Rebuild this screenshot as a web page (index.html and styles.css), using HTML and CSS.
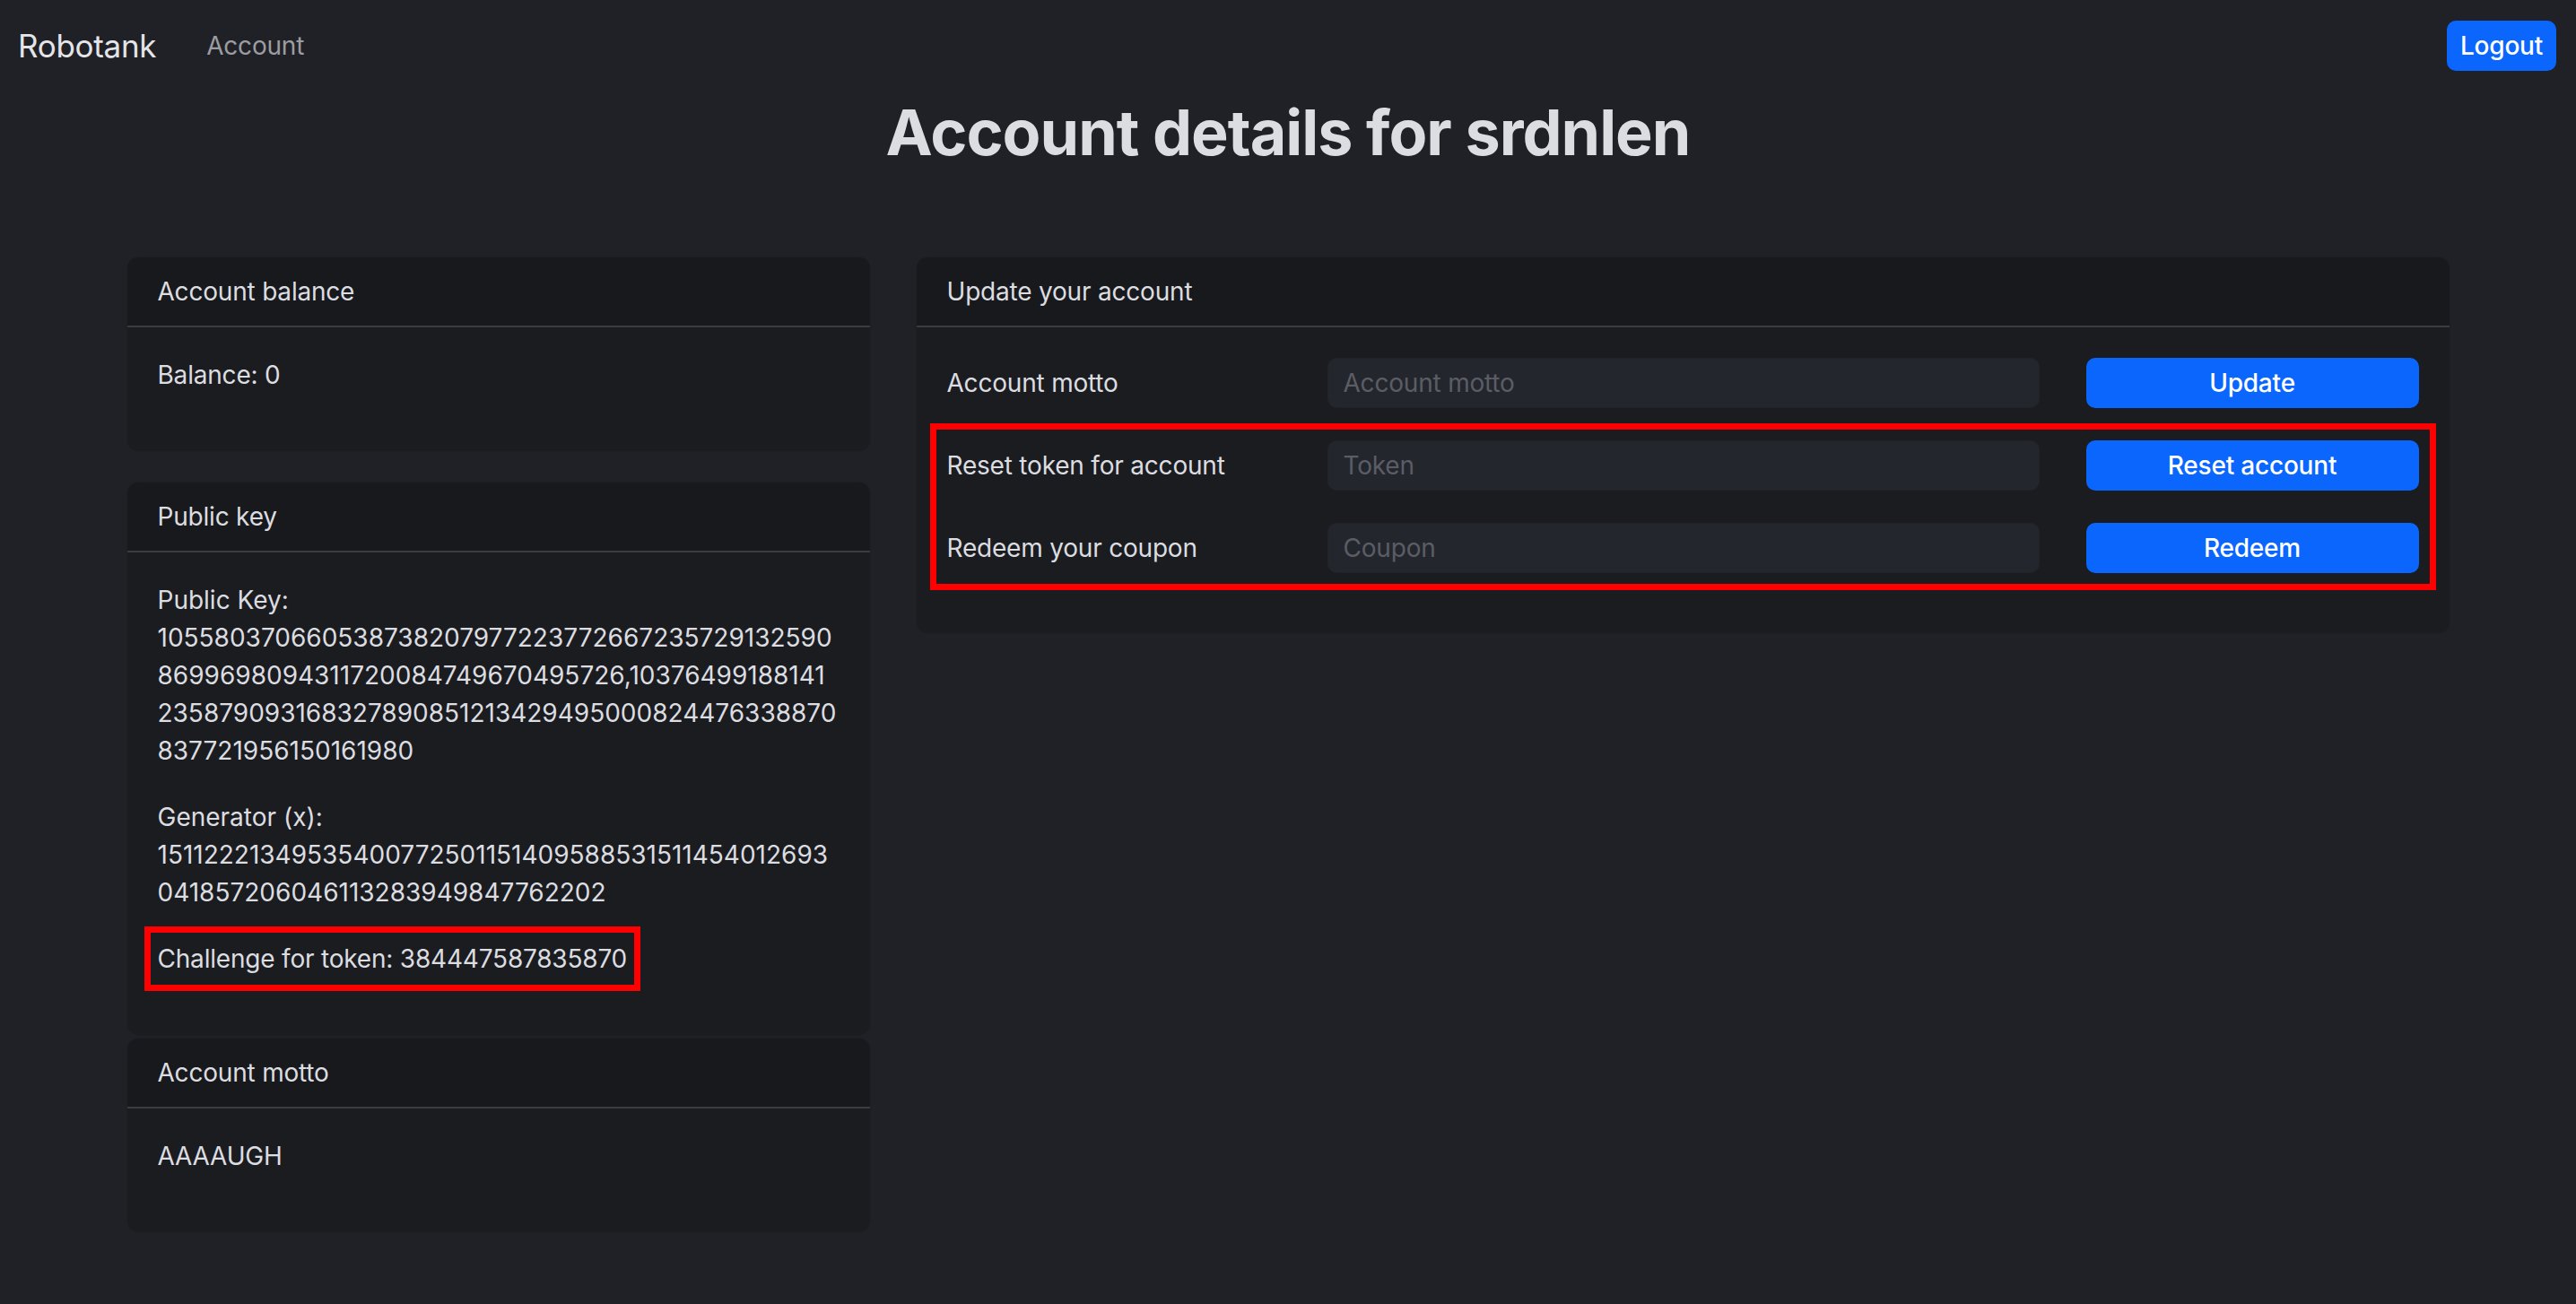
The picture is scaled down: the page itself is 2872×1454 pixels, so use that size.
FILE: index.html
```html
<!DOCTYPE html>
<html lang="en">
<head>
<meta charset="utf-8">
<title>Robotank - Account</title>
<link rel="stylesheet" href="styles.css">
</head>
<body>
<nav class="navbar">
  <a class="brand" href="#">Robotank</a>
  <a class="nav-link" href="#">Account</a>
  <button class="btn btn-logout" type="button">Logout</button>
</nav>

<h1 class="title">Account details for srdnlen</h1>

<main class="container">
  <section class="left-col">
    <div class="card card-balance">
      <div class="card-header">Account balance</div>
      <div class="card-body">
        <p>Balance: 0</p>
      </div>
    </div>

    <div class="card card-key">
      <div class="card-header">Public key</div>
      <div class="card-body">
        <p class="mono-break">Public Key:<br>1055803706605387382079772237726672357291325908699698094311720084749670495726,10376499188141235879093168327890851213429495000824476338870837721956150161980</p>
        <p class="mono-break">Generator (x):<br>15112221349535400772501151409588531511454012693041857206046113283949847762202</p>
        <p class="challenge">Challenge for token: 384447587835870</p>
      </div>
    </div>

    <div class="card card-motto">
      <div class="card-header">Account motto</div>
      <div class="card-body">
        <p>AAAAUGH</p>
      </div>
    </div>
  </section>

  <section class="right-col">
    <div class="card card-update">
      <div class="card-header">Update your account</div>
      <div class="card-body form-body">
        <div class="form-row">
          <label class="form-label" for="motto">Account motto</label>
          <input class="form-input" id="motto" type="text" placeholder="Account motto">
          <button class="btn btn-action" type="button">Update</button>
        </div>
        <div class="highlight-group">
          <div class="form-row">
            <label class="form-label" for="token">Reset token for account</label>
            <input class="form-input" id="token" type="text" placeholder="Token">
            <button class="btn btn-action" type="button">Reset account</button>
          </div>
          <div class="form-row">
            <label class="form-label" for="coupon">Redeem your coupon</label>
            <input class="form-input" id="coupon" type="text" placeholder="Coupon">
            <button class="btn btn-action" type="button">Redeem</button>
          </div>
        </div>
      </div>
    </div>
  </section>
</main>
</body>
</html>
```

FILE: styles.css
```css
* {
  box-sizing: border-box;
}

html, body {
  margin: 0;
  padding: 0;
}

body {
  background: #202126;
  color: #dcdde0;
  font-family: Inter, "Noto Sans", "Liberation Sans", sans-serif;
  font-size: 28px;
  line-height: 42px;
  letter-spacing: -0.2px;
  min-height: 1454px;
}

/* Navbar */
.navbar {
  display: flex;
  align-items: center;
  height: 102px;
  padding: 0 22px 0 20px;
}

.brand {
  color: #e4e5e8;
  font-size: 35px;
  text-decoration: none;
  letter-spacing: -0.3px;
  margin-right: 56px;
}

.nav-link {
  color: #9c9da1;
  font-size: 28px;
  text-decoration: none;
}

.btn {
  font-family: Inter, "Noto Sans", "Liberation Sans", sans-serif;
  border: none;
  color: #ffffff;
  background: #0a66fd;
  border-radius: 10px;
  cursor: pointer;
  letter-spacing: -0.2px;
}

.btn-logout {
  margin-left: auto;
  height: 56px;
  width: 122px;
  font-size: 28px;
  font-weight: 500;
  padding: 0;
}

/* Title */
.title {
  margin: 4px 0 96px;
  text-align: center;
  font-size: 70px;
  line-height: 84px;
  font-weight: 700;
  color: #dcdde0;
  letter-spacing: -1px;
}

/* Layout */
.container {
  width: 2591px;
  margin: 0 auto;
  display: grid;
  grid-template-columns: 830px 1fr;
  column-gap: 50px;
  align-items: start;
}

.left-col {
  display: flex;
  flex-direction: column;
}

/* Cards */
.card {
  background: #1b1c20;
  border: 1px solid #1e1f23;
  border-radius: 14px;
  overflow: hidden;
}

.card-header {
  background: #18191c;
  padding: 17px 34px 17px;
  border-bottom: 2px solid #3b3c40;
}

.card-body {
  padding: 32px 34px;
}

.card-body p {
  margin: 0 0 32px;
}

.card-balance {
  margin-bottom: 33px;
}

.card-key {
  margin-bottom: 2px;
}

.mono-break {
  word-break: break-all;
  letter-spacing: 0;
}

.challenge {
  width: fit-content;
  outline: 7px solid #ff0000;
  outline-offset: 8px;
}

/* Update form */
.form-body {
  padding: 34px 34px 67px;
  display: flex;
  flex-direction: column;
  gap: 36px;
}

.highlight-group {
  display: flex;
  flex-direction: column;
  gap: 36px;
  outline: 7px solid #ff0000;
  outline-offset: 12px;
}

.form-row {
  display: flex;
  align-items: center;
  height: 56px;
}

.form-label {
  flex: 0 0 424px;
  color: #dcdde0;
}

.form-input {
  flex: 1 1 auto;
  height: 56px;
  min-width: 0;
  background: #24262d;
  border: 1px solid #222329;
  border-radius: 10px;
  padding: 0 17px;
  color: #dcdde0;
  font-family: Inter, "Noto Sans", "Liberation Sans", sans-serif;
  font-size: 28px;
  letter-spacing: -0.2px;
  outline: none;
}

.form-input::placeholder {
  color: #5b5d65;
}

.btn-action {
  flex: 0 0 371px;
  margin-left: 52px;
  height: 56px;
  font-size: 28px;
  font-weight: 500;
}
```
